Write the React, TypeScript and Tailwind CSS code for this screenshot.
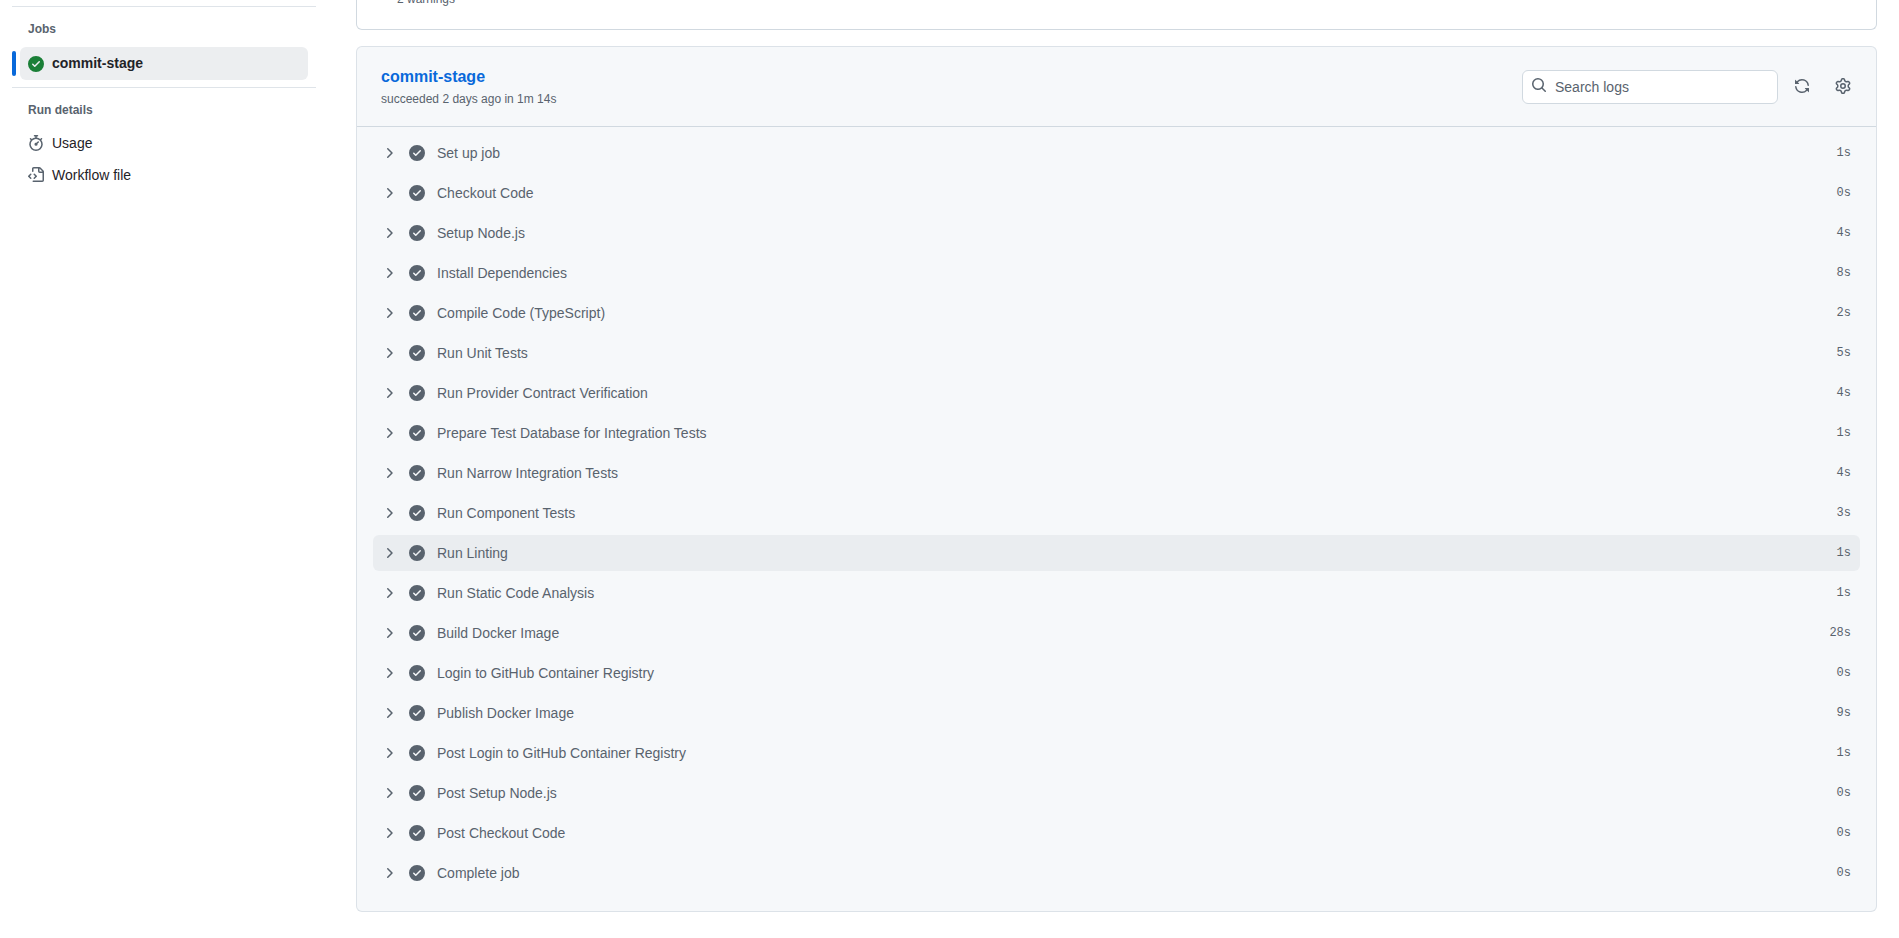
import type { ReactNode } from 'react';

const icons = {
  check:
    'M8 16A8 8 0 1 1 8 0a8 8 0 0 1 0 16Zm3.78-9.72a.751.751 0 0 0-.018-1.042.751.751 0 0 0-1.042-.018L6.75 9.19 5.28 7.72a.751.751 0 0 0-1.042.018.751.751 0 0 0-.018 1.042l2 2a.75.75 0 0 0 1.06 0Z',
  chevron:
    'M6.22 3.22a.75.75 0 0 1 1.06 0l4.25 4.25a.75.75 0 0 1 0 1.06l-4.25 4.25a.751.751 0 0 1-1.042-.018.751.751 0 0 1-.018-1.042L9.94 8 6.22 4.28a.75.75 0 0 1 0-1.06Z',
  search:
    'M10.68 11.74a6 6 0 0 1-7.922-8.982 6 6 0 0 1 8.982 7.922l3.04 3.04a.749.749 0 0 1-.326 1.275.749.749 0 0 1-.734-.215ZM11.5 7a4.499 4.499 0 1 0-8.997 0A4.499 4.499 0 0 0 11.5 7Z',
  sync:
    'M1.705 8.005a.75.75 0 0 1 .834.656 5.5 5.5 0 0 0 9.592 2.97l-1.204-1.204a.25.25 0 0 1 .177-.427h3.646a.25.25 0 0 1 .25.25v3.646a.25.25 0 0 1-.427.177l-1.38-1.38A7.002 7.002 0 0 1 1.05 8.84a.75.75 0 0 1 .656-.834ZM8 2.5a5.487 5.487 0 0 0-4.131 1.869l1.204 1.204A.25.25 0 0 1 4.896 6H1.25A.25.25 0 0 1 1 5.75V2.104a.25.25 0 0 1 .427-.177l1.38 1.38A7.002 7.002 0 0 1 14.95 7.16a.75.75 0 0 1-1.49.178A5.5 5.5 0 0 0 8 2.5Z',
  gear:
    'M8 0a8.2 8.2 0 0 1 .701.031C9.444.095 9.99.645 10.16 1.29l.288 1.107c.018.066.079.158.212.224.231.114.454.243.668.386.123.082.233.09.299.071l1.103-.303c.644-.176 1.392.021 1.82.63.27.385.506.792.704 1.218.315.675.111 1.422-.364 1.891l-.814.806c-.049.048-.098.147-.088.294.016.257.016.515 0 .772-.01.147.038.246.088.294l.814.806c.475.469.679 1.216.364 1.891a7.977 7.977 0 0 1-.704 1.217c-.428.61-1.176.807-1.82.63l-1.102-.302c-.067-.019-.177-.011-.3.071a5.909 5.909 0 0 1-.668.386c-.133.066-.194.158-.211.224l-.29 1.106c-.168.646-.715 1.196-1.458 1.26a8.006 8.006 0 0 1-1.402 0c-.743-.064-1.289-.614-1.458-1.26l-.289-1.106c-.018-.066-.079-.158-.212-.224a5.738 5.738 0 0 1-.668-.386c-.123-.082-.233-.09-.299-.071l-1.103.303c-.644.176-1.392-.021-1.82-.63a8.12 8.12 0 0 1-.704-1.218c-.315-.675-.111-1.422.363-1.891l.815-.806c.05-.048.098-.147.088-.294a6.214 6.214 0 0 1 0-.772c.01-.147-.038-.246-.088-.294l-.815-.806C.635 6.045.431 5.298.746 4.623a7.92 7.92 0 0 1 .704-1.217c.428-.61 1.176-.807 1.82-.63l1.102.302c.067.019.177.011.3-.071.214-.143.437-.272.668-.386.133-.066.194-.158.211-.224l.29-1.106C6.009.645 6.556.095 7.299.03 7.53.01 7.764 0 8 0Zm-.571 1.525c-.036.003-.108.036-.137.146l-.289 1.105c-.147.561-.549.967-.998 1.189-.173.086-.34.183-.5.29-.417.278-.97.423-1.529.27l-1.103-.303c-.109-.03-.175.016-.195.045-.22.312-.412.644-.573.99-.014.031-.021.11.059.19l.815.806c.411.406.562.957.53 1.456a4.709 4.709 0 0 0 0 .582c.032.499-.119 1.05-.53 1.456l-.815.806c-.081.08-.073.159-.059.19.162.346.353.677.573.989.02.03.085.076.195.046l1.102-.303c.56-.153 1.113-.008 1.53.27.161.107.328.204.501.29.447.222.85.629.997 1.189l.289 1.105c.029.109.101.143.137.146a6.6 6.6 0 0 0 1.142 0c.036-.003.108-.036.137-.146l.289-1.105c.147-.561.549-.967.998-1.189.173-.086.34-.183.5-.29.417-.278.97-.423 1.529-.27l1.103.303c.109.029.175-.016.195-.045.22-.313.411-.644.573-.99.014-.031.021-.11-.059-.19l-.815-.806c-.411-.406-.562-.957-.53-1.456a4.709 4.709 0 0 0 0-.582c-.032-.499.119-1.05.53-1.456l.815-.806c.081-.08.073-.159.059-.19a6.464 6.464 0 0 0-.573-.989c-.02-.03-.085-.076-.195-.046l-1.102.303c-.56.153-1.113.008-1.53-.27a4.44 4.44 0 0 0-.501-.29c-.447-.222-.85-.629-.997-1.189l-.289-1.105c-.029-.11-.101-.143-.137-.146a6.6 6.6 0 0 0-1.142 0ZM11 8a3 3 0 1 1-6 0 3 3 0 0 1 6 0ZM9.5 8a1.5 1.5 0 1 0-3.001.001A1.5 1.5 0 0 0 9.5 8Z',
  stopwatch:
    'M5.75.75A.75.75 0 0 1 6.5 0h3a.75.75 0 0 1 0 1.5h-.75v1l-.001.041a6.724 6.724 0 0 1 3.464 1.435l.007-.006.75-.75a.749.749 0 0 1 1.275.326.749.749 0 0 1-.215.734l-.75.75-.006.007a6.75 6.75 0 1 1-10.548 0L2.72 5.03l-.75-.75a.751.751 0 0 1 .018-1.042.751.751 0 0 1 1.042-.018l.75.75.007.006A6.72 6.72 0 0 1 7.25 2.541V1.5H6.5a.75.75 0 0 1-.75-.75ZM8 14.5a5.25 5.25 0 1 0-.001-10.501A5.25 5.25 0 0 0 8 14.5Zm.389-6.7 1.33-1.33a.75.75 0 1 1 1.061 1.06L9.45 8.861A1.503 1.503 0 0 1 8 10.75a1.499 1.499 0 1 1 .389-2.95Z',
  fileCode:
    'M4 1.75C4 .784 4.784 0 5.75 0h5.586c.464 0 .909.184 1.237.513l2.914 2.914c.329.328.513.773.513 1.237v8.586A1.75 1.75 0 0 1 14.25 15h-9a.75.75 0 0 1 0-1.5h9a.25.25 0 0 0 .25-.25V6h-2.75A1.75 1.75 0 0 1 10 4.25V1.5H5.75a.25.25 0 0 0-.25.25v2.5a.75.75 0 0 1-1.5 0Zm1.72 4.97a.75.75 0 0 1 1.06 0l2 2a.75.75 0 0 1 0 1.06l-2 2a.749.749 0 0 1-1.275-.326.749.749 0 0 1 .215-.734l1.47-1.47-1.47-1.47a.75.75 0 0 1 0-1.06ZM3.28 7.78 1.81 9.25l1.47 1.47a.751.751 0 0 1-.018 1.042.751.751 0 0 1-1.042.018l-2-2a.75.75 0 0 1 0-1.06l2-2a.751.751 0 0 1 1.042.018.751.751 0 0 1 .018 1.042Zm8.22-6.218V4.25c0 .138.112.25.25.25h2.688l-.011-.013-2.914-2.914-.013-.011Z',
};

function Octicon({ d, className }: { d: string; className: string }) {
  return (
    <svg viewBox="0 0 16 16" fill="currentColor" className={`w-4 h-4 shrink-0 ${className}`}>
      <path d={d} />
    </svg>
  );
}

const steps = [
  { name: 'Set up job', time: '1s' },
  { name: 'Checkout Code', time: '0s' },
  { name: 'Setup Node.js', time: '4s' },
  { name: 'Install Dependencies', time: '8s' },
  { name: 'Compile Code (TypeScript)', time: '2s' },
  { name: 'Run Unit Tests', time: '5s' },
  { name: 'Run Provider Contract Verification', time: '4s' },
  { name: 'Prepare Test Database for Integration Tests', time: '1s' },
  { name: 'Run Narrow Integration Tests', time: '4s' },
  { name: 'Run Component Tests', time: '3s' },
  { name: 'Run Linting', time: '1s', hovered: true },
  { name: 'Run Static Code Analysis', time: '1s' },
  { name: 'Build Docker Image', time: '28s' },
  { name: 'Login to GitHub Container Registry', time: '0s' },
  { name: 'Publish Docker Image', time: '9s' },
  { name: 'Post Login to GitHub Container Registry', time: '1s' },
  { name: 'Post Setup Node.js', time: '0s' },
  { name: 'Post Checkout Code', time: '0s' },
  { name: 'Complete job', time: '0s' },
];

function SideLink({ icon, children }: { icon: string; children: ReactNode }) {
  return (
    <div className="flex items-center h-8 pl-4 gap-2 text-sm text-[#1f2328]">
      <Octicon d={icon} className="text-[#59636e]" />
      <span>{children}</span>
    </div>
  );
}

function Sidebar() {
  return (
    <aside className="w-[356px] shrink-0 pl-3 pr-10 pt-1.5">
      <div className="border-t border-[#d1d9e0b3]" />
      <h3 className="pl-4 pt-3 pb-2 text-xs leading-5 font-semibold text-[#59636e]">Jobs</h3>
      <div className="relative pl-2 pr-2">
        <span className="absolute left-0 top-1 bottom-1 w-1 rounded-md bg-[#0969da]" />
        <div className="flex items-center gap-2 h-[33px] pl-2 rounded-md bg-[#eceef0]">
          <Octicon d={icons.check} className="text-[#1a7f37]" />
          <span className="text-sm font-semibold text-[#1f2328] mt-[-1px]">commit-stage</span>
        </div>
      </div>
      <div className="mt-[7px] border-t border-[#d1d9e0b3]" />
      <h3 className="pl-4 pt-[12px] pb-[7px] text-xs leading-5 font-semibold text-[#59636e]">Run details</h3>
      <SideLink icon={icons.stopwatch}>Usage</SideLink>
      <SideLink icon={icons.fileCode}>Workflow file</SideLink>
    </aside>
  );
}

function StepRow({ name, time, hovered }: { name: string; time: string; hovered?: boolean }) {
  return (
    <div
      className={`flex items-center h-9 mb-1 rounded-md pl-2 pr-[9px] ${hovered ? 'bg-[#eaedf0]' : ''}`}
    >
      <Octicon d={icons.chevron} className="text-[#59636e]" />
      <Octicon d={icons.check} className="ml-3 text-[#59636e]" />
      <span className="ml-3 flex-1 text-sm text-[#59636e]">{name}</span>
      <span className="text-xs text-[#59636e] [font-family:'Liberation_Mono',monospace]">{time}</span>
    </div>
  );
}

export default function App() {
  return (
    <div className="flex h-[938px] overflow-hidden bg-white text-[#1f2328] [font-family:'Liberation_Sans',Arial,sans-serif]">
      <Sidebar />
      <main className="flex-1 min-w-0 pr-[22px]">
        <div className="h-[30px] overflow-hidden border border-t-0 border-[#d1d9e0] rounded-b-md bg-white pl-10">
          <p className="mt-[-11px] text-xs leading-5 text-[#59636e]">2 warnings</p>
        </div>
        <section className="mt-4 border border-[#d1d9e0b3] rounded-md bg-[#f6f8fa] h-[866px]">
          <header className="flex items-center justify-between h-[80px] border-b border-[#d1d9e0] pl-6 pr-[25px]">
            <div className="pt-[1px]">
              <h2 className="text-base leading-6 font-semibold text-[#0969da]">commit-stage</h2>
              <p className="text-xs leading-5 text-[#59636e]">succeeded 2 days ago in 1m 14s</p>
            </div>
            <div className="flex items-center">
              <div className="flex items-center w-[256px] h-[34px] rounded-md border border-[#d1d9e0] bg-white pl-2">
                <Octicon d={icons.search} className="text-[#59636e] mt-[-4px]" />
                <span className="ml-[8px] text-sm text-[#59636e]">Search logs</span>
              </div>
              <div className="flex items-center ml-[16px] gap-[25px]">
                <Octicon d={icons.sync} className="text-[#59636e] mt-[-2px]" />
                <Octicon d={icons.gear} className="text-[#59636e] mt-[-2px]" />
              </div>
            </div>
          </header>
          <div className="pt-[8px] px-4">
            {steps.map((step) => (
              <StepRow key={step.name} {...step} />
            ))}
          </div>
        </section>
      </main>
    </div>
  );
}
